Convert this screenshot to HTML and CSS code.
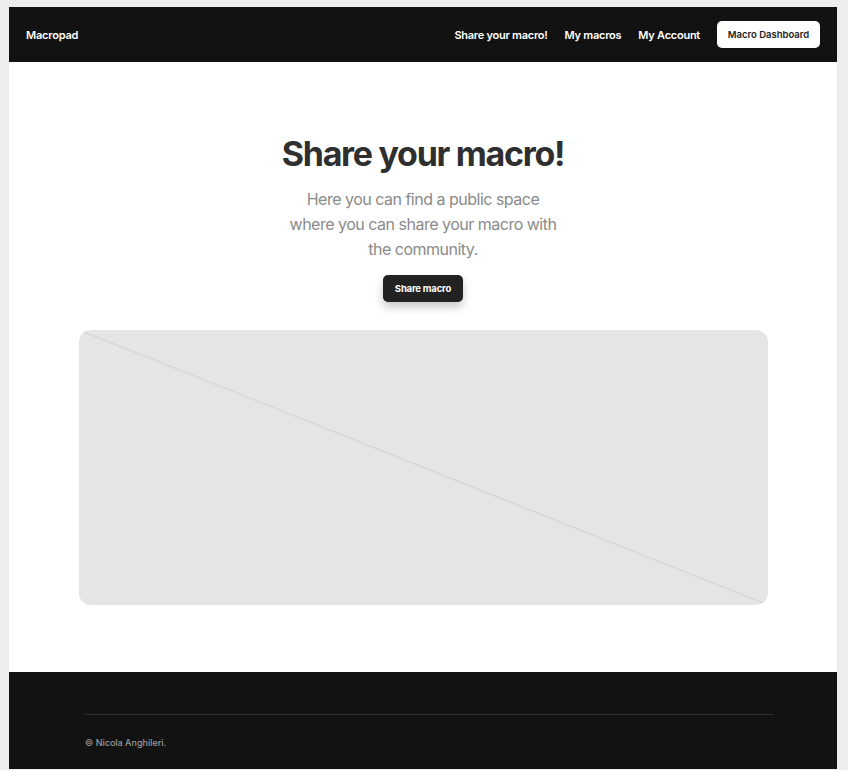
FILE: index.html
```html
<!DOCTYPE html>
<html lang="en">
<head>
<meta charset="utf-8">
<title>Macropad</title>
<link rel="stylesheet" href="styles.css">
</head>
<body>
<div class="page">
  <header class="nav">
    <a class="brand" href="#">Macropad</a>
    <nav class="links">
      <a href="#">Share your macro!</a>
      <a href="#">My macros</a>
      <a href="#">My Account</a>
      <a class="dash-btn" href="#">Macro Dashboard</a>
    </nav>
  </header>
  <main class="main">
    <section class="hero">
      <h1>Share your macro!</h1>
      <p>Here you can find a public space where you can share your macro with the community.</p>
      <a class="cta" href="#">Share macro</a>
    </section>
    <div class="placeholder">
      <svg class="diag" viewBox="0 0 100 100" preserveAspectRatio="none"><line x1="0" y1="0" x2="100" y2="100" vector-effect="non-scaling-stroke"/></svg>
    </div>
  </main>
  <footer class="footer">
    <div class="footer-inner">
      <div class="rule"></div>
      <div class="copy">© Nicola Anghileri.</div>
    </div>
  </footer>
</div>
</body>
</html>
```
FILE: styles.css
```css
* { box-sizing: border-box; }
html, body { margin: 0; padding: 0; }
body {
  background: #ededed;
  font-family: Inter, "Noto Sans", "Liberation Sans", sans-serif;
  color: #333;
}
a { text-decoration: none; color: inherit; }
.page {
  width: 828px;
  margin: 7px 0 0 9px;
  background: #fff;
}
.nav {
  height: 55px;
  background: #121212;
  display: flex;
  align-items: center;
  justify-content: space-between;
  padding: 0 17px 0 17px;
}
.brand {
  color: #fff;
  font-size: 11px;
  font-weight: 600;
  letter-spacing: -0.2px;
}
.links {
  display: flex;
  align-items: center;
  gap: 17px;
}
.links a {
  color: #fff;
  font-size: 11px;
  font-weight: 600;
  letter-spacing: -0.25px;
}
.links a.dash-btn {
  background: #fff;
  color: #222;
  font-size: 9.5px;
  font-weight: 600;
  letter-spacing: 0;
  height: 27px;
  width: 103px;
  border-radius: 5px;
  display: flex;
  align-items: center;
  justify-content: center;
  margin-left: 0;
}
.main {
  padding: 70px 0 67px;
  display: flex;
  flex-direction: column;
  align-items: center;
}
.hero {
  display: flex;
  flex-direction: column;
  align-items: center;
  text-align: center;
}
.hero h1 {
  margin: 0;
  font-size: 34px;
  line-height: 44px;
  font-weight: 700;
  letter-spacing: -1.3px;
  color: #2f2f2f;
}
.hero p {
  margin: 11px 0 0;
  width: 280px;
  font-size: 16px;
  line-height: 25px;
  color: #8a8a8a;
  letter-spacing: -0.5px;
}
.cta {
  margin-top: 13px;
  width: 80px;
  height: 27px;
  border-radius: 5px;
  background: #222;
  color: #fff;
  font-size: 9.5px;
  font-weight: 700;
  letter-spacing: -0.2px;
  display: flex;
  align-items: center;
  justify-content: center;
  box-shadow: 0 5px 10px rgba(0,0,0,0.22);
}
.placeholder {
  margin-top: 28px;
  width: 689px;
  height: 275px;
  background: #e5e5e5;
  border-radius: 12px;
  overflow: hidden;
}
.diag {
  width: 100%;
  height: 100%;
  display: block;
}
.diag line {
  stroke: #d5d5d5;
  stroke-width: 1.3;
}
.footer {
  background: #121212;
  height: 97px;
  padding: 42px 0 0 76px;
}
.footer-inner {
  width: 689px;
}
.rule {
  height: 1px;
  background: #2e2e2e;
}
.copy {
  margin-top: 22px;
  font-size: 9px;
  color: #9c9c9c;
  font-weight: 500;
}
```
